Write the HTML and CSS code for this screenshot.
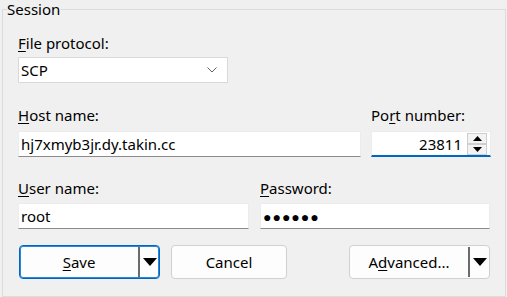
FILE: index.html
```html
<!DOCTYPE html>
<html lang="en">
<head>
    <meta charset="UTF-8">
    <title>Session</title>
    <link rel="stylesheet" href="styles.css">
</head>
<body>
    <fieldset class="session">
        <legend>Session</legend>

        <!-- Protocol -->
        <div class="field">
            <label class="caption"><u>F</u>ile protocol:</label>
            <div class="combo">
                <span>SCP</span>
                <svg class="chevron" width="10" height="6" viewBox="0 0 10 6">
                    <path d="M0.5 0.5 L5 5 L9.5 0.5" fill="none" stroke="#5f5f5f" stroke-width="1"/>
                </svg>
            </div>
        </div>

        <!-- Host / port -->
        <div class="row host-row">
            <div class="field">
                <label class="caption"><u>H</u>ost name:</label>
                <input class="edit" type="text" value="hj7xmyb3jr.dy.takin.cc">
            </div>
            <div class="field">
                <label class="caption">Po<u>r</u>t number:</label>
                <div class="edit port">
                    <span class="port-value">23811</span>
                    <div class="spin">
                        <div class="spin-btn"><svg width="9" height="5" viewBox="0 0 9 5"><path d="M0 5 L4.5 0 L9 5 Z" fill="#000"/></svg></div>
                        <div class="spin-btn"><svg width="9" height="5" viewBox="0 0 9 5"><path d="M0 0 L9 0 L4.5 5 Z" fill="#000"/></svg></div>
                    </div>
                </div>
            </div>
        </div>

        <!-- User / password -->
        <div class="row user-row">
            <div class="field">
                <label class="caption"><u>U</u>ser name:</label>
                <input class="edit" type="text" value="root">
            </div>
            <div class="field">
                <label class="caption"><u>P</u>assword:</label>
                <div class="edit dots">●●●●●●</div>
            </div>
        </div>

        <!-- Buttons -->
        <div class="buttons">
            <button class="btn split default"><span class="btn-text"><u>S</u>ave</span><span class="split-line"></span><span class="arrow"></span></button>
            <button class="btn cancel">Cancel</button>
            <button class="btn split advanced"><span class="btn-text">A<u>d</u>vanced...</span><span class="split-line"></span><span class="arrow"></span></button>
        </div>
    </fieldset>
</body>
</html>
```

FILE: styles.css
```css
* {
    margin: 0;
    padding: 0;
    box-sizing: border-box;
}
body {
    background-color: #f0f0f0;
    font-family: 'Noto Sans', sans-serif;
    font-size: 15px;
    color: #000;
    width: 507px;
    height: 297px;
    overflow: hidden;
}
u {
    text-decoration-thickness: 1px;
    text-underline-offset: 2px;
}

/* Frame */
.session {
    margin: 1px 1px 0 2px;
    height: 296px;
    border: 1px solid #dcdcdc;
    padding: 16px 14px 0 15px;
}
.session legend {
    margin-left: -11px;
    padding: 0 1px 0 0;
    line-height: 16px;
}

.caption {
    display: block;
    line-height: 20px;
    margin-bottom: 4px;
}

/* Combo box */
.combo {
    width: 210px;
    height: 26px;
    background-color: #fff;
    border: 1px solid #d9d9d9;
    display: flex;
    align-items: center;
    justify-content: space-between;
    padding: 0 10px 0 2px;
}
.chevron {
    display: block;
}

/* Rows */
.row {
    display: grid;
    column-gap: 10px;
}
.host-row {
    grid-template-columns: 343px 120px;
    margin-top: 22px;
}
.host-row .caption {
    margin-bottom: 6px;
}
.user-row {
    grid-template-columns: 231px 230px;
    column-gap: 11px;
    margin-top: 21px;
}
.user-row .caption {
    margin-bottom: 5px;
}

.edit {
    display: block;
    width: 100%;
    height: 26px;
    background-color: #fff;
    border: 1px solid #ececec;
    border-bottom-color: #8b8b8b;
    font-family: inherit;
    font-size: 15px;
    color: #000;
    padding: 0 2px;
    outline: none;
}

/* Port spinner */
.port {
    display: flex;
    align-items: center;
    justify-content: flex-end;
    border-bottom: 2px solid #0067c0;
    padding: 0 3px 0 0;
}
.port-value {
    margin-right: 5px;
}
.spin {
    display: flex;
    flex-direction: column;
}
.spin-btn {
    width: 20px;
    height: 11px;
    border: 1px solid #cfcfcf;
    background-color: #f3f3f3;
    display: flex;
    align-items: center;
    justify-content: center;
}

/* Password */
.dots {
    display: flex;
    align-items: center;
    font-size: 14px;
    letter-spacing: 1px;
    padding-left: 2px;
}

/* Buttons */
.buttons {
    display: flex;
    margin-top: 16px;
    padding-left: 1px;
}
.btn {
    height: 34px;
    font-family: inherit;
    font-size: 15px;
    color: #000;
    background-color: #fdfdfd;
    border: 1px solid #d0d0d0;
    border-radius: 4px;
    display: flex;
    align-items: center;
}
.btn.cancel {
    width: 116px;
    justify-content: center;
    margin-left: 11px;
}
.btn.split {
    width: 141px;
    padding: 0 2px 0 0;
}
.btn.default {
    border-color: #0067c0;
    box-shadow: inset 0 0 0 1px #2e86d6;
}
.btn.advanced {
    margin-left: auto;
    margin-right: 1px;
}
.btn-text {
    flex: 1;
    text-align: center;
}
.split-line {
    width: 2px;
    height: 30px;
    background-color: #6b6b6b;
    margin-right: 3px;
}
.arrow {
    width: 0;
    height: 0;
    border-left: 7px solid transparent;
    border-right: 7px solid transparent;
    border-top: 8px solid #000;
}
```
